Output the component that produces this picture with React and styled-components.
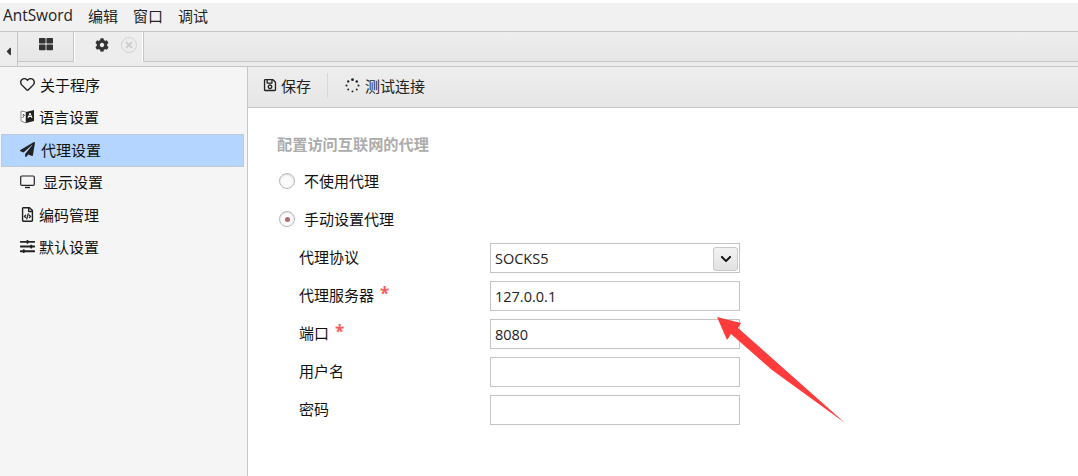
import React from 'react';
import styled, { createGlobalStyle } from 'styled-components';
import {
  FaRegHeart,
  FaPaperPlane,
  FaRegFileCode,
  FaSlidersH,
  FaRegSave,
  FaThLarge,
  FaCog,
  FaCaretLeft,
  FaChevronDown,
  FaTimes,
} from 'react-icons/fa';

const GlobalStyle = createGlobalStyle`
  html, body {
    margin: 0;
    padding: 0;
    height: 100%;
    background: #ffffff;
    overflow: hidden;
  }
  #root {
    height: 100%;
  }
`;

const FONT = `"Open Sans", "Noto Sans CJK SC", sans-serif`;
const LINE = '#c6c6c6';

const Page = styled.div`
  position: relative;
  display: flex;
  flex-direction: column;
  width: 1078px;
  height: 476px;
  overflow: hidden;
  font-family: ${FONT};
  font-size: 15px;
  color: #111;
  background: #fff;
`;

const MenuBar = styled.div`
  display: flex;
  align-items: center;
  gap: 15px;
  box-sizing: content-box;
  height: 25px;
  margin-top: 3px;
  padding: 0 0 3px 3px;
  background: #f1f1f1;
  border-bottom: 1px solid ${LINE};
`;

const MenuItem = styled.span`
  font-size: 15px;
  color: #222;
  &:first-child {
    font-size: 15.4px;
  }
`;

const TabBar = styled.div`
  display: flex;
  height: 29px;
  background: linear-gradient(#eeeeee, #e6e6e6);
  border-bottom: 1px solid ${LINE};
`;

const ScrollLeft = styled.div`
  display: flex;
  align-items: center;
  justify-content: center;
  box-sizing: border-box;
  width: 18px;
  height: 30px;
  padding-top: 8px;
  border-right: 1px solid ${LINE};
  background: linear-gradient(#eeeeee, #ececec);
  color: #333;
  font-size: 13px;
`;

const Tab = styled.div`
  display: flex;
  align-items: center;
  justify-content: center;
  box-sizing: border-box;
  width: 56px;
  height: 29px;
  padding-bottom: 5px;
  border-right: 1px solid ${LINE};
  color: #333;
  font-size: 14px;
`;

const ActiveTab = styled.div`
  display: flex;
  align-items: center;
  box-sizing: border-box;
  width: 69px;
  height: 30px;
  padding: 0 0 5px 20px;
  gap: 12px;
  border-left: 1px solid #fff;
  border-right: 1px solid #fff;
  background: linear-gradient(#eeeeee, #ececec);
  color: #333;
  font-size: 14px;
`;

const TabRest = styled.div`
  flex: 1;
  border-left: 1px solid ${LINE};
`;

const CloseBadge = styled.span`
  display: flex;
  align-items: center;
  justify-content: center;
  box-sizing: border-box;
  width: 16px;
  height: 16px;
  border: 1px solid #d2d2d2;
  border-radius: 50%;
  color: #cdcdcd;
  font-size: 10px;
`;

const Gap = styled.div`
  height: 4px;
  background: #ececec;
  border-bottom: 1px solid ${LINE};
  &::before {
    content: '';
    display: block;
    width: 17px;
    height: 100%;
    border-right: 1px solid ${LINE};
  }
`;

const Body = styled.div`
  flex: 1;
  display: flex;
  min-height: 0;
`;

const Sidebar = styled.div`
  width: 248px;
  box-sizing: border-box;
  padding: 2px 3px 0 1px;
  background: #f5f5f5;
  border-right: 1px solid ${LINE};
`;

const SideItem = styled.div`
  display: flex;
  align-items: center;
  height: 32.5px;
  box-sizing: border-box;
  padding: 0 0 2px 18px;
  gap: ${(p) => p.$gap || 5}px;
  background: ${(p) => (p.$active ? '#b4d5ff' : 'transparent')};
  border: 1px solid ${(p) => (p.$active ? '#c2c9d2' : 'transparent')};
  color: #111;
  font-size: 15px;
`;

const SideIcon = styled.span`
  display: flex;
  align-items: center;
  justify-content: flex-start;
  width: 15px;
  color: #222;
  font-size: 15px;
`;

const Main = styled.div`
  flex: 1;
  display: flex;
  flex-direction: column;
`;

const Toolbar = styled.div`
  display: flex;
  align-items: center;
  box-sizing: content-box;
  height: 36px;
  padding: 0 0 4px 15px;
  background: linear-gradient(#eeeeee, #e6e6e6);
  border-bottom: 1px solid ${LINE};
`;

const ToolButton = styled.div`
  display: flex;
  align-items: center;
  gap: ${(p) => p.$gap}px;
  font-size: 15px;
  color: #222;
`;

const ToolDivider = styled.div`
  width: 1px;
  height: 25px;
  background: #cfdbe0;
  margin: 0 17px 0 16px;
`;

const Content = styled.div`
  padding: 27px 0 0 29px;
`;

const SectionTitle = styled.div`
  font-size: 15.2px;
  font-weight: bold;
  color: #acacac;
  line-height: 18px;
  margin-bottom: 18px;
`;

const RadioRow = styled.div`
  display: flex;
  align-items: center;
  gap: 9px;
  box-sizing: border-box;
  height: 20px;
  padding-bottom: 2px;
  margin: 0 0 18px 2px;
  color: #111;
  font-size: 15px;
`;

const Radio = styled.span`
  display: flex;
  align-items: center;
  justify-content: center;
  box-sizing: border-box;
  width: 16px;
  height: 16px;
  margin-bottom: -2px;
  border-radius: 50%;
  border: 1px solid #b8b8b8;
  background: #fbfbfb;
  box-shadow: inset 0 1px 2px rgba(0, 0, 0, 0.12);
  &::after {
    content: '';
    display: ${(p) => (p.$checked ? 'block' : 'none')};
    width: 5px;
    height: 5px;
    border-radius: 50%;
    background: #b56a6a;
  }
`;

const Form = styled.div`
  display: flex;
  flex-direction: column;
  gap: 8px;
  margin-left: 22px;
  margin-top: -4px;
`;

const FormRow = styled.div`
  display: grid;
  grid-template-columns: 191px 250px;
  align-items: center;
  height: 30px;
`;

const FieldLabel = styled.label`
  display: flex;
  align-items: center;
  font-size: 15px;
  color: #111;
  padding-bottom: 3px;
`;

const Required = styled.span`
  color: #ff5a5a;
  font-size: 17px;
  font-weight: bold;
  line-height: 1;
  margin-left: 6px;
  position: relative;
  top: -1px;
`;

const Field = styled.div`
  position: relative;
  display: flex;
  align-items: center;
  box-sizing: border-box;
  height: 30px;
  padding-left: 4px;
  border: 1px solid #c4c4c4;
  background: #fff;
  font-size: 14.5px;
  color: #222;
`;

const SelectButton = styled.span`
  position: absolute;
  right: 1px;
  top: 3px;
  display: flex;
  align-items: center;
  justify-content: center;
  width: 25px;
  height: 24px;
  box-sizing: border-box;
  border: 1px solid #c9c9c9;
  border-radius: 3px;
  background: linear-gradient(#f2f2f2, #e2e2e2);
  color: #111;
  font-size: 12px;
`;

const Arrow = styled.svg`
  position: absolute;
  left: 700px;
  top: 300px;
  pointer-events: none;
`;

const LanguageIcon = () => (
  <svg width="15" height="15" viewBox="0 0 15 15">
    <path d="M1 2l5 1v11l-5-2z" fill="#fff" stroke="#888" strokeWidth="1" />
    <path d="M6 3l8-2v11l-8 2z" fill="#222" />
    <path d="M8 9l2-5 2 5M9 7.5h2" stroke="#fff" strokeWidth="1" fill="none" />
    <path d="M2.5 6h2M3.5 5v1M2.5 9l2-3" stroke="#444" strokeWidth="0.8" fill="none" />
  </svg>
);

const MonitorIcon = () => (
  <svg width="15" height="14" viewBox="0 0 15 14">
    <rect x="0.7" y="1" width="13.6" height="9.4" rx="1.2" fill="none" stroke="#222" strokeWidth="1.2" />
    <path d="M5 12.5h5" stroke="#222" strokeWidth="1.4" />
  </svg>
);

const SpinnerIcon = () => (
  <svg width="15" height="15" viewBox="0 0 14 14" fill="#222">
    <circle cx="7" cy="1.6" r="1.3" />
    <circle cx="11" cy="3.2" r="1.2" />
    <circle cx="12.6" cy="7" r="1" />
    <circle cx="11" cy="10.8" r="0.9" />
    <circle cx="7" cy="12.5" r="0.9" />
    <circle cx="3" cy="10.8" r="0.9" />
    <circle cx="1.4" cy="7" r="1" />
    <circle cx="3" cy="3.2" r="1.1" />
  </svg>
);

const sideItems = [
  { label: '关于程序', icon: <FaRegHeart />, gap: 5 },
  { label: '语言设置', icon: <LanguageIcon />, gap: 4 },
  { label: '代理设置', icon: <FaPaperPlane />, gap: 6, active: true },
  { label: '显示设置', icon: <MonitorIcon />, gap: 8 },
  { label: '编码管理', icon: <FaRegFileCode />, gap: 4 },
  { label: '默认设置', icon: <FaSlidersH />, gap: 4 },
];

const fields = [
  { label: '代理协议', value: 'SOCKS5', select: true },
  { label: '代理服务器', value: '127.0.0.1', required: true },
  { label: '端口', value: '8080', required: true },
  { label: '用户名', value: '' },
  { label: '密码', value: '' },
];

const App = () => {
  return (
    <Page>
      <GlobalStyle />
      <MenuBar>
        <MenuItem>AntSword</MenuItem>
        <MenuItem>编辑</MenuItem>
        <MenuItem>窗口</MenuItem>
        <MenuItem>调试</MenuItem>
      </MenuBar>
      <TabBar>
        <ScrollLeft>
          <FaCaretLeft />
        </ScrollLeft>
        <Tab>
          <FaThLarge />
        </Tab>
        <ActiveTab>
          <FaCog />
          <CloseBadge>
            <FaTimes />
          </CloseBadge>
        </ActiveTab>
        <TabRest />
      </TabBar>
      <Gap />
      <Body>
        <Sidebar>
          {sideItems.map((item) => (
            <SideItem key={item.label} $active={item.active} $gap={item.gap}>
              <SideIcon>{item.icon}</SideIcon>
              {item.label}
            </SideItem>
          ))}
        </Sidebar>
        <Main>
          <Toolbar>
            <ToolButton $gap={4}>
              <FaRegSave size={14} />
              保存
            </ToolButton>
            <ToolDivider />
            <ToolButton $gap={5}>
              <SpinnerIcon />
              测试连接
            </ToolButton>
          </Toolbar>
          <Content>
            <SectionTitle>配置访问互联网的代理</SectionTitle>
            <RadioRow>
              <Radio />
              不使用代理
            </RadioRow>
            <RadioRow>
              <Radio $checked />
              手动设置代理
            </RadioRow>
            <Form>
              {fields.map((field) => (
                <FormRow key={field.label}>
                  <FieldLabel>
                    {field.label}
                    {field.required && <Required>*</Required>}
                  </FieldLabel>
                  <Field>
                    {field.value}
                    {field.select && (
                      <SelectButton>
                        <FaChevronDown />
                      </SelectButton>
                    )}
                  </Field>
                </FormRow>
              ))}
            </Form>
          </Content>
        </Main>
      </Body>
      <Arrow width="160" height="130" viewBox="700 300 160 130">
        <polygon
          points="717,317 741,323 738,328 845,423 772,370 731,334 727,340"
          fill="#ff3b3b"
        />
      </Arrow>
    </Page>
  );
};

export default App;
